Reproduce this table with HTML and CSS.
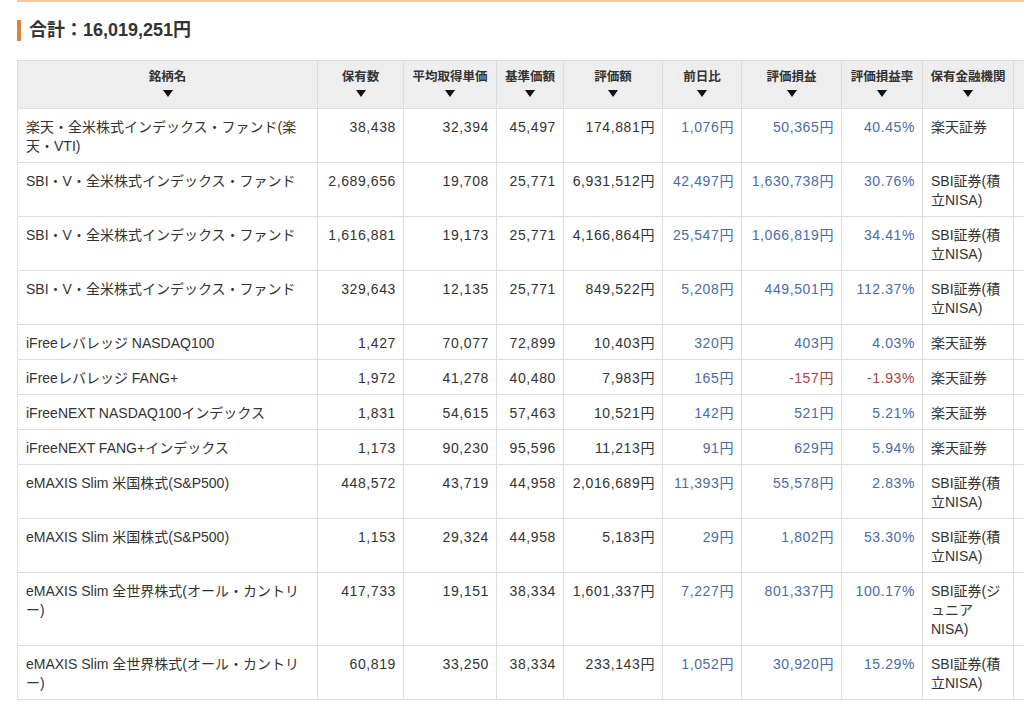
FILE: index.html
```html
<!DOCTYPE html>
<html lang="ja">
<head>
<meta charset="utf-8">
<title>合計</title>
<link rel="stylesheet" href="styles.css">
</head>
<body>
<div class="page">
  <div class="topline"></div>
  <h2 class="total">合計：16,019,251円</h2>
  <div class="table-wrap">
    <table class="holdings">
      <colgroup>
        <col class="c-name"><col class="c-qty"><col class="c-avg"><col class="c-base"><col class="c-val"><col class="c-day"><col class="c-pl"><col class="c-rate"><col class="c-inst"><col class="c-extra">
      </colgroup>
      <thead>
        <tr>
          <th>銘柄名<span class="arrow"></span></th>
          <th>保有数<span class="arrow"></span></th>
          <th>平均取得単価<span class="arrow"></span></th>
          <th>基準価額<span class="arrow"></span></th>
          <th>評価額<span class="arrow"></span></th>
          <th>前日比<span class="arrow"></span></th>
          <th>評価損益<span class="arrow"></span></th>
          <th>評価損益率<span class="arrow"></span></th>
          <th>保有金融機関<span class="arrow"></span></th>
          <th></th>
        </tr>
      </thead>
      <tbody>
        <tr><td class="name">楽天・全米株式インデックス・ファンド(楽天・VTI)</td><td class="num">38,438</td><td class="num">32,394</td><td class="num">45,497</td><td class="num">174,881円</td><td class="num up">1,076円</td><td class="num up">50,365円</td><td class="num up">40.45%</td><td class="inst">楽天証券</td><td></td></tr>
        <tr><td class="name">SBI・V・全米株式インデックス・ファンド</td><td class="num">2,689,656</td><td class="num">19,708</td><td class="num">25,771</td><td class="num">6,931,512円</td><td class="num up">42,497円</td><td class="num up">1,630,738円</td><td class="num up">30.76%</td><td class="inst">SBI証券(積立NISA)</td><td></td></tr>
        <tr><td class="name">SBI・V・全米株式インデックス・ファンド</td><td class="num">1,616,881</td><td class="num">19,173</td><td class="num">25,771</td><td class="num">4,166,864円</td><td class="num up">25,547円</td><td class="num up">1,066,819円</td><td class="num up">34.41%</td><td class="inst">SBI証券(積立NISA)</td><td></td></tr>
        <tr><td class="name">SBI・V・全米株式インデックス・ファンド</td><td class="num">329,643</td><td class="num">12,135</td><td class="num">25,771</td><td class="num">849,522円</td><td class="num up">5,208円</td><td class="num up">449,501円</td><td class="num up">112.37%</td><td class="inst">SBI証券(積立NISA)</td><td></td></tr>
        <tr><td class="name">iFreeレバレッジ NASDAQ100</td><td class="num">1,427</td><td class="num">70,077</td><td class="num">72,899</td><td class="num">10,403円</td><td class="num up">320円</td><td class="num up">403円</td><td class="num up">4.03%</td><td class="inst">楽天証券</td><td></td></tr>
        <tr><td class="name">iFreeレバレッジ FANG+</td><td class="num">1,972</td><td class="num">41,278</td><td class="num">40,480</td><td class="num">7,983円</td><td class="num up">165円</td><td class="num down">-157円</td><td class="num down">-1.93%</td><td class="inst">楽天証券</td><td></td></tr>
        <tr><td class="name">iFreeNEXT NASDAQ100インデックス</td><td class="num">1,831</td><td class="num">54,615</td><td class="num">57,463</td><td class="num">10,521円</td><td class="num up">142円</td><td class="num up">521円</td><td class="num up">5.21%</td><td class="inst">楽天証券</td><td></td></tr>
        <tr><td class="name">iFreeNEXT FANG+インデックス</td><td class="num">1,173</td><td class="num">90,230</td><td class="num">95,596</td><td class="num">11,213円</td><td class="num up">91円</td><td class="num up">629円</td><td class="num up">5.94%</td><td class="inst">楽天証券</td><td></td></tr>
        <tr><td class="name">eMAXIS Slim 米国株式(S&amp;P500)</td><td class="num">448,572</td><td class="num">43,719</td><td class="num">44,958</td><td class="num">2,016,689円</td><td class="num up">11,393円</td><td class="num up">55,578円</td><td class="num up">2.83%</td><td class="inst">SBI証券(積立NISA)</td><td></td></tr>
        <tr><td class="name">eMAXIS Slim 米国株式(S&amp;P500)</td><td class="num">1,153</td><td class="num">29,324</td><td class="num">44,958</td><td class="num">5,183円</td><td class="num up">29円</td><td class="num up">1,802円</td><td class="num up">53.30%</td><td class="inst">SBI証券(積立NISA)</td><td></td></tr>
        <tr><td class="name">eMAXIS Slim 全世界株式(オール・カントリー)</td><td class="num">417,733</td><td class="num">19,151</td><td class="num">38,334</td><td class="num">1,601,337円</td><td class="num up">7,227円</td><td class="num up">801,337円</td><td class="num up">100.17%</td><td class="inst">SBI証券(ジュニアNISA)</td><td></td></tr>
        <tr><td class="name">eMAXIS Slim 全世界株式(オール・カントリー)</td><td class="num">60,819</td><td class="num">33,250</td><td class="num">38,334</td><td class="num">233,143円</td><td class="num up">1,052円</td><td class="num up">30,920円</td><td class="num up">15.29%</td><td class="inst">SBI証券(積立NISA)</td><td></td></tr>
      </tbody>
    </table>
  </div>
</div>
</body>
</html>
```

FILE: styles.css
```css
html, body {
  margin: 0;
  padding: 0;
  background: #ffffff;
  overflow: hidden;
}

body {
  font-family: "Liberation Sans", "Noto Sans CJK JP", sans-serif;
  color: #333333;
}

.page {
  padding-left: 17px;
}

.topline {
  height: 2px;
  background: #f4c9a2;
}

.total {
  margin: 18px 0 0 0;
  height: 21px;
  border-left: 4px solid #e0843a;
  padding-left: 8px;
  font-size: 18px;
  line-height: 21px;
  font-weight: bold;
  color: #333333;
}

.table-wrap {
  margin-top: 19px;
  width: 1100px;
}

.holdings {
  table-layout: fixed;
  border-collapse: separate;
  border-spacing: 0;
  width: 1087px;
  border-top: 1px solid #dddddd;
  border-left: 1px solid #dddddd;
  font-size: 14px;
}

.c-name { width: 300px; }
.c-qty { width: 86px; }
.c-avg { width: 93px; }
.c-base { width: 67px; }
.c-val { width: 99px; }
.c-day { width: 79px; }
.c-pl { width: 100px; }
.c-rate { width: 81px; }
.c-inst { width: 91px; }
.c-extra { width: 90px; }

.holdings th,
.holdings td {
  border-right: 1px solid #dddddd;
  border-bottom: 1px solid #dddddd;
  vertical-align: top;
}

.holdings th {
  background: #eeeeee;
  height: 48px;
  box-sizing: border-box;
  padding: 8px 2px 0;
  font-size: 12.5px;
  line-height: 17px;
  font-weight: bold;
  text-align: center;
  color: #333333;
  white-space: nowrap;
}

.arrow {
  display: block;
  width: 0;
  height: 0;
  margin: 4px auto 0;
  border-left: 5px solid transparent;
  border-right: 5px solid transparent;
  border-top: 7px solid #111111;
}

.holdings td {
  padding: 9px 8px 6px 8px;
  line-height: 19px;
  text-align: left;
}

.holdings td.name {
  padding-right: 12px;
}

.holdings td.num {
  text-align: right;
  padding-left: 2px;
  padding-right: 7px;
  letter-spacing: 0.6px;
}

.up { color: #4a6ca6; }
.down { color: #a94442; }
```
